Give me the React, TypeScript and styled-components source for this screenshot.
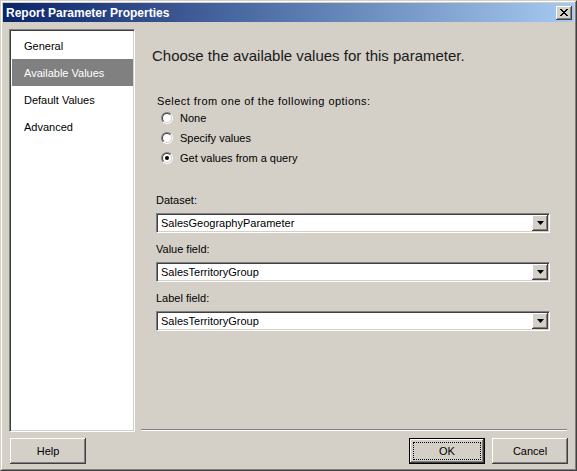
import React from "react";
import styled, { createGlobalStyle, css } from "styled-components";

const Global = createGlobalStyle`
  html, body { margin: 0; padding: 0; background: #d4d0c8; }
  body { font-family: "Liberation Sans", Arial, sans-serif; font-size: 11px; color: #000; }
`;

const Window = styled.div`
  width: 577px;
  height: 471px;
  box-sizing: border-box;
  background: #d4d0c8;
  border: 1px solid;
  border-color: #d4d0c8 #404040 #404040 #d4d0c8;
  display: flex;
  flex-direction: column;
`;

const Frame = styled.div`
  flex: 1;
  display: flex;
  flex-direction: column;
  border: 1px solid;
  border-color: #ffffff #808080 #808080 #ffffff;
  padding: 1px;
  min-height: 0;
`;

const TitleBar = styled.div`
  height: 19px;
  flex: none;
  display: flex;
  align-items: center;
  justify-content: space-between;
  padding: 0 2px 0 3px;
  background: linear-gradient(to right, #0a246a, #a6caf0);
  color: #fff;
  font-weight: bold;
  font-size: 12px;
`;

const raised = css`
  background: #d4d0c8;
  box-shadow: inset -1px -1px #404040, inset 1px 1px #ffffff, inset -2px -2px #808080, inset 2px 2px #d4d0c8;
`;

const CloseBtn = styled.div`
  ${raised};
  width: 16px;
  height: 14px;
  display: flex;
  align-items: center;
  justify-content: center;
`;

const Body = styled.div`
  flex: 1;
  display: flex;
  flex-direction: column;
  padding: 7px 6px 3px 6px;
  min-height: 0;
`;

const Main = styled.div`
  height: 403px;
  display: flex;
`;

const Sidebar = styled.div`
  width: 126px;
  box-sizing: border-box;
  background: #fff;
  border: 1px solid;
  border-color: #808080 #ffffff #ffffff #808080;
  box-shadow: inset 1px 1px #404040, inset -1px -1px #d4d0c8;
  padding: 2px 1px 2px 2px;
  display: flex;
  flex-direction: column;
`;

const NavItem = styled.div<{ $active?: boolean }>`
  height: 27px;
  display: flex;
  align-items: center;
  padding-left: 12px;
  background: ${(p) => (p.$active ? "#808080" : "transparent")};
  color: ${(p) => (p.$active ? "#fff" : "#000")};
  font-size: 11px;
`;

const Content = styled.div`
  flex: 1;
  display: flex;
  flex-direction: column;
  padding: 18px 0 1px 0;
`;

const Inner = styled.div`
  padding: 0 18px 0 17px;
  display: flex;
  flex-direction: column;
`;

const Heading = styled.div`
  font-size: 15px;
  line-height: 18px;
  color: #1a1a1a;
`;

const Group = styled.div`
  margin-top: 29px;
  padding-left: 5px;
  display: flex;
  flex-direction: column;
`;

const Label = styled.div`
  line-height: 14px;
  height: 14px;
`;

const Prompt = styled(Label)`
  letter-spacing: 0.45px;
`;

const RadioRow = styled.div`
  height: 20px;
  display: flex;
  align-items: center;
  gap: 7px;
  padding-left: 4px;
`;

const RadioOuter = styled.span`
  width: 12px;
  height: 12px;
  box-sizing: border-box;
  border-radius: 50%;
  border: 1px solid;
  border-color: #808080 #ffffff #ffffff #808080;
  display: flex;
`;

const RadioInner = styled.span`
  flex: 1;
  border-radius: 50%;
  border: 1px solid;
  border-color: #404040 #d4d0c8 #d4d0c8 #404040;
  background: #fff;
  display: flex;
  align-items: center;
  justify-content: center;
`;

const Dot = styled.span`
  width: 4px;
  height: 4px;
  border-radius: 50%;
  background: #000;
`;

const Fields = styled.div`
  margin-top: 25px;
  margin-left: 4px;
  display: flex;
  flex-direction: column;
  gap: 9px;
`;

const Field = styled.div`
  display: flex;
  flex-direction: column;
  gap: 6px;
`;

const Combo = styled.div`
  height: 20px;
  box-sizing: border-box;
  background: #fff;
  border: 1px solid;
  border-color: #808080 #ffffff #ffffff #808080;
  box-shadow: inset 1px 1px #404040, inset -1px -1px #d4d0c8;
  padding: 1px 1px 1px 4px;
  display: flex;
  align-items: center;
  justify-content: space-between;
  font-size: 11px;
`;

const DropBtn = styled.div`
  ${raised};
  width: 16px;
  align-self: stretch;
  display: flex;
  align-items: center;
  justify-content: center;
`;

const Separator = styled.div`
  margin: auto 1px 0 6px;
  border-top: 1px solid #808080;
  border-bottom: 1px solid #ffffff;
  height: 0;
`;

const Footer = styled.div`
  margin-top: 6px;
  padding-left: 1px;
  display: flex;
  align-items: center;
  gap: 7px;
`;

const Spacer = styled.div`
  flex: 1;
`;

const Button = styled.div<{ $default?: boolean }>`
  width: 76px;
  height: 26px;
  box-sizing: border-box;
  display: flex;
  align-items: center;
  justify-content: center;
  font-size: 11px;
  background: #d4d0c8;
  ${(p) =>
    p.$default
      ? css`
          border: 1px solid #000;
          box-shadow: inset -1px -1px #404040, inset 1px 1px #ffffff, inset -2px -2px #808080;
          padding: 3px;
        `
      : css`
          box-shadow: inset -1px -1px #404040, inset 1px 1px #ffffff, inset -2px -2px #808080, inset 2px 2px #d4d0c8;
        `}
`;

const Focus = styled.div`
  flex: 1;
  align-self: stretch;
  border: 1px dotted #000;
  display: flex;
  align-items: center;
  justify-content: center;
`;

const Arrow = () => (
  <svg width="7" height="4" viewBox="0 0 7 4">
    <path d="M0 0h7L3.5 4z" fill="#000" />
  </svg>
);

const Radio = ({ checked, label }: { checked?: boolean; label: string }) => (
  <RadioRow>
    <RadioOuter>
      <RadioInner>{checked && <Dot />}</RadioInner>
    </RadioOuter>
    <span>{label}</span>
  </RadioRow>
);

const ComboField = ({ label, value }: { label: string; value: string }) => (
  <Field>
    <Label>{label}</Label>
    <Combo>
      <span>{value}</span>
      <DropBtn>
        <Arrow />
      </DropBtn>
    </Combo>
  </Field>
);

export default function App() {
  return (
    <>
      <Global />
      <Window>
        <Frame>
          <TitleBar>
            <span>Report Parameter Properties</span>
            <CloseBtn>
              <svg width="8" height="7" viewBox="0 0 8 7">
                <path d="M0 0L7 7M1 0L8 7M7 0L0 7M8 0L1 7" stroke="#000" strokeWidth="1" />
              </svg>
            </CloseBtn>
          </TitleBar>
          <Body>
            <Main>
              <Sidebar>
                <NavItem>General</NavItem>
                <NavItem $active>Available Values</NavItem>
                <NavItem>Default Values</NavItem>
                <NavItem>Advanced</NavItem>
              </Sidebar>
              <Content>
                <Inner>
                  <Heading>Choose the available values for this parameter.</Heading>
                  <Group>
                    <Prompt>Select from one of the following options:</Prompt>
                    <Radio label="None" />
                    <Radio label="Specify values" />
                    <Radio checked label="Get values from a query" />
                  </Group>
                  <Fields>
                    <ComboField label="Dataset:" value="SalesGeographyParameter" />
                    <ComboField label="Value field:" value="SalesTerritoryGroup" />
                    <ComboField label="Label field:" value="SalesTerritoryGroup" />
                  </Fields>
                </Inner>
                <Separator />
              </Content>
            </Main>
            <Footer>
              <Button>Help</Button>
              <Spacer />
              <Button $default>
                <Focus>OK</Focus>
              </Button>
              <Button>Cancel</Button>
            </Footer>
          </Body>
        </Frame>
      </Window>
    </>
  );
}
